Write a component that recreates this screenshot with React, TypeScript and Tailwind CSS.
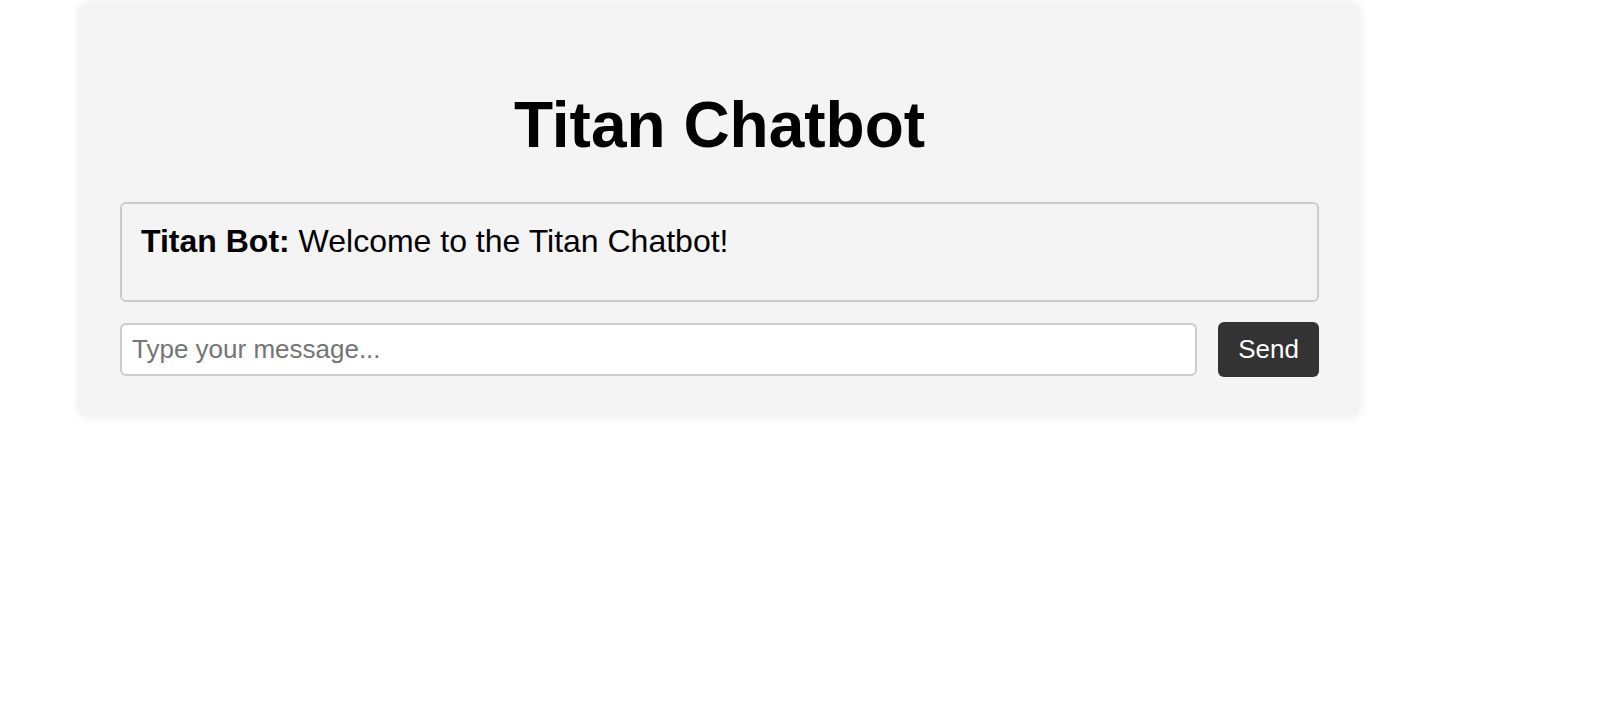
export default function App() {
  return (
    <div className="min-h-screen bg-white pt-[3px] pl-[79px]" style={{ fontFamily: '"Liberation Sans", Arial, sans-serif' }}>
      {/* Chat card */}
      <div className="w-[1281px] rounded-[10px] bg-[#f4f4f4] px-[41px] pt-[40px] pb-[39px] shadow-[0_0_10px_rgba(0,0,0,0.1)]">
        <h1 className="mt-[45px] mb-[40px] text-center text-[64px] leading-[74px] font-bold text-black">
          Titan Chatbot
        </h1>

        {/* Messages */}
        <div className="h-[100px] rounded-[6px] border-2 border-[#ccc] px-[19px] pt-[19px]">
          <p className="text-[32px] leading-[37px] text-black">
            <strong className="font-bold">Titan Bot:</strong> Welcome to the Titan Chatbot!
          </p>
        </div>

        {/* Input row */}
        <div className="mt-[20px] flex items-center gap-[21px]">
          <input
            type="text"
            placeholder="Type your message..."
            className="h-[53px] flex-1 rounded-[6px] border-2 border-[#ccc] bg-white px-[10px] text-[26px] text-black outline-none placeholder:text-[#757575]"
          />
          <button className="h-[55px] rounded-[6px] bg-[#333] px-[20px] text-[26px] text-white">
            Send
          </button>
        </div>
      </div>
    </div>
  );
}
